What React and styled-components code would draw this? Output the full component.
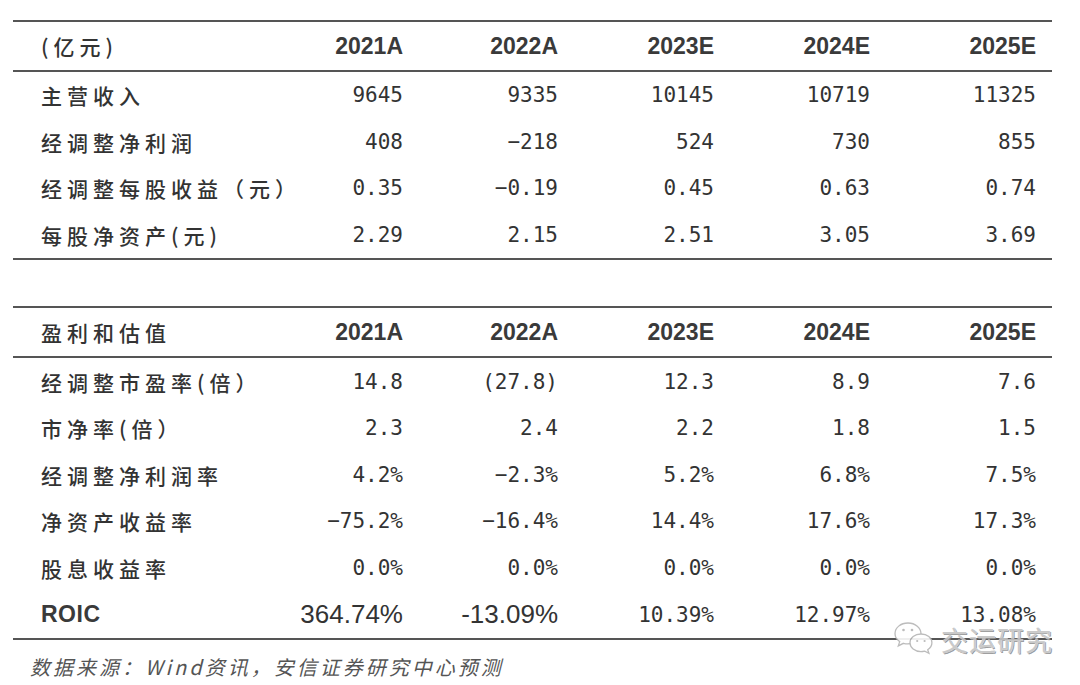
import React from "react";
import styled, { createGlobalStyle } from "styled-components";

const GlobalStyle = createGlobalStyle`
  html, body {
    margin: 0;
    padding: 0;
    background: #ffffff;
  }
`;

const years = ["2021A", "2022A", "2023E", "2024E", "2025E"];

const finance = [
  ["主营收入", ["9645", "9335", "10145", "10719", "11325"]],
  ["经调整净利润", ["408", "−218", "524", "730", "855"]],
  ["经调整每股收益（元）", ["0.35", "−0.19", "0.45", "0.63", "0.74"]],
  ["每股净资产(元)", ["2.29", "2.15", "2.51", "3.05", "3.69"]],
];

const valuation = [
  ["经调整市盈率(倍）", ["14.8", "(27.8)", "12.3", "8.9", "7.6"]],
  ["市净率(倍）", ["2.3", "2.4", "2.2", "1.8", "1.5"]],
  ["经调整净利润率", ["4.2%", "−2.3%", "5.2%", "6.8%", "7.5%"]],
  ["净资产收益率", ["−75.2%", "−16.4%", "14.4%", "17.6%", "17.3%"]],
  ["股息收益率", ["0.0%", "0.0%", "0.0%", "0.0%", "0.0%"]],
];

const Page = styled.div`
  position: relative;
  width: 1080px;
  height: 685px;
  padding: 20px 0 0 13px;
  box-sizing: border-box;
  color: #333;
`;

const Table = styled.div`
  width: 1039px;
  border-top: 2px solid #555;
  border-bottom: 2px solid #555;
  margin-bottom: ${(p) => p.$gap || 0}px;
`;

const Row = styled.div`
  display: grid;
  grid-template-columns: 277px 113px 155px 156px 156px 166px;
  padding-right: 16px;
  height: ${(p) => (p.$head ? 48 : 46.6)}px;
  align-items: center;
  border-bottom: ${(p) => (p.$head ? "2px solid #555" : "none")};
`;

const Label = styled.div`
  padding-left: 28px;
  white-space: nowrap;
  font-family: "Noto Sans CJK SC", sans-serif;
  font-size: 21px;
  letter-spacing: 5px;
  font-weight: 500;
`;

const CodeLabel = styled.div`
  padding-left: 28px;
  font-family: "Liberation Sans", Arial, sans-serif;
  font-weight: 700;
  font-size: 23px;
  letter-spacing: 0.5px;
  color: #3a3a3a;
`;

const Year = styled.div`
  text-align: right;
  font-family: "Liberation Sans", Arial, sans-serif;
  font-weight: 700;
  font-size: 23px;
  color: #3a3a3a;
`;

const Num = styled.div`
  text-align: right;
  white-space: nowrap;
  font-family: ${(p) => (p.$prop ? '"Liberation Sans", Arial, sans-serif' : '"DejaVu Sans Mono", monospace')};
  font-size: ${(p) => (p.$prop ? 26 : 21)}px;
`;

const Source = styled.div`
  margin-top: 12px;
  padding-left: 17px;
  font-family: "Noto Sans CJK SC", sans-serif;
  font-style: italic;
  font-size: 20px;
  letter-spacing: 3px;
  color: #555;
`;

const Mark = styled.div`
  position: absolute;
  left: 893px;
  top: 620px;
  display: flex;
  align-items: center;
  gap: 6px;
  color: #c4c4c4;
  font-family: "Noto Sans CJK SC", sans-serif;
  font-size: 27px;
  letter-spacing: 1px;
  text-shadow: 0 0 1px #fff, 1px 1px 0 #8a8a8a;
  opacity: 0.9;
`;

const WeChat = () => (
  <svg width="42" height="38" viewBox="0 0 42 38" fill="#fff" stroke="#b5b5b5" strokeWidth="1.3">
    <path d="M15 2C7.5 2 2 6.8 2 12.6c0 3.3 1.8 6.1 4.7 8l-1.4 4.3 5.1-2.6c1.5.4 3 .6 4.6.6 7.4 0 13-4.8 13-10.3S22.4 2 15 2z" />
    <circle cx="10.5" cy="9" r="1.3" fill="#b5b5b5" stroke="none" />
    <circle cx="19" cy="9" r="1.3" fill="#b5b5b5" stroke="none" />
    <path d="M28 13c-6.3 0-11 4-11 8.8S21.7 30.6 28 30.6c1.3 0 2.5-.2 3.7-.5l4.2 2.2-1.2-3.6c2.5-1.6 4.2-4 4.2-6.9C38.9 17 34.3 13 28 13z" />
    <circle cx="24.2" cy="20" r="1.1" fill="#b5b5b5" stroke="none" />
    <circle cx="31.6" cy="20" r="1.1" fill="#b5b5b5" stroke="none" />
  </svg>
);

const DataTable = ({ title, rows, gap, extra }) => (
  <Table $gap={gap}>
    <Row $head>
      <Label>{title}</Label>
      {years.map((y) => (
        <Year key={y}>{y}</Year>
      ))}
    </Row>
    {rows.map(([name, vals]) => (
      <Row key={name}>
        <Label>{name}</Label>
        {vals.map((v, i) => (
          <Num key={i}>{v}</Num>
        ))}
      </Row>
    ))}
    {extra}
  </Table>
);

const App = () => {
  return (
    <Page>
      <GlobalStyle />
      <DataTable title="(亿元)" rows={finance} gap={46} />
      <DataTable
        title="盈利和估值"
        rows={valuation}
        extra={
          <Row>
            <CodeLabel>ROIC</CodeLabel>
            {["364.74%", "-13.09%"].map((v) => (
              <Num key={v} $prop>{v}</Num>
            ))}
            {["10.39%", "12.97%", "13.08%"].map((v) => (
              <Num key={v}>{v}</Num>
            ))}
          </Row>
        }
      />
      <Source>数据来源：Wind资讯，安信证券研究中心预测</Source>
      <Mark>
        <WeChat />
        <span>交运研究</span>
      </Mark>
    </Page>
  );
};

export default App;
